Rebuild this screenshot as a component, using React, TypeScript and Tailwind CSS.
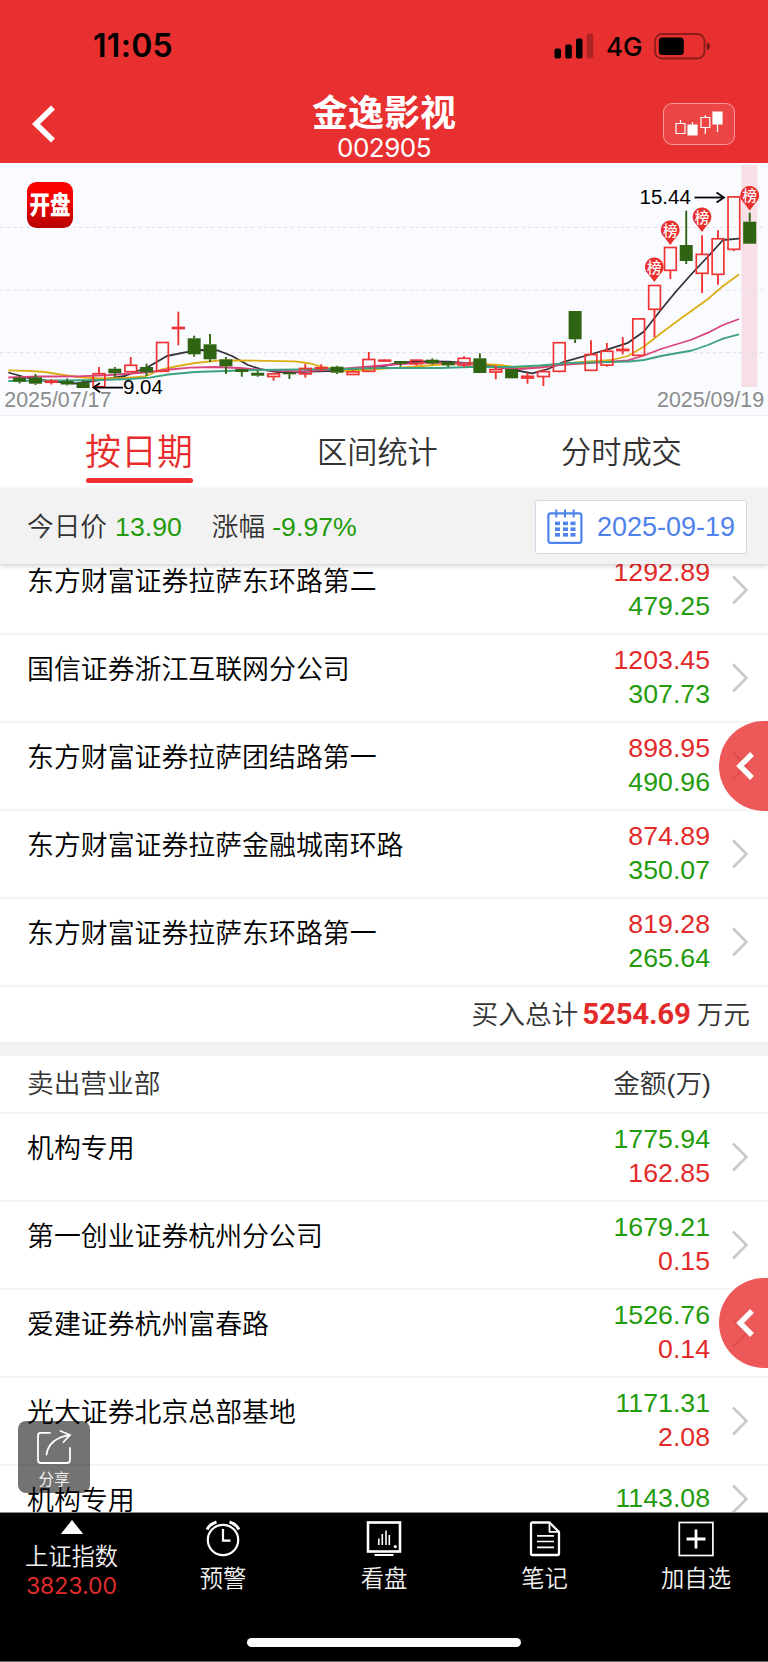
import React from "react";

type Candle = [kind: "r" | "g", high: number, top: number, bottom: number, low: number];

const CANDLES: Candle[] = [
  ["g", 376.5, 377.7, 381.7, 383.5],
  ["g", 374, 377.3, 383.7, 385],
  ["r", 379, 381.2, 382.2, 384.5],
  ["g", 378.5, 381, 384.5, 385.5],
  ["g", 380, 382.7, 388, 388],
  ["r", 367, 373.7, 386.7, 386.7],
  ["g", 367, 368.7, 373.3, 377],
  ["r", 357, 365.3, 371.7, 371.7],
  ["g", 363.7, 367, 372.3, 376],
  ["r", 342.5, 342.5, 371.3, 371.3],
  ["r", 311.7, 327.5, 328.5, 345.3],
  ["g", 335.7, 338.3, 354.3, 356.7],
  ["g", 334, 344.3, 359.3, 362],
  ["g", 357, 359.3, 366.3, 374],
  ["g", 369, 369, 372, 376.7],
  ["g", 370.7, 372.7, 375.7, 376.7],
  ["r", 372.7, 373.9, 376.5, 380.7],
  ["g", 372, 372.7, 374.3, 379],
  ["r", 364, 368.5, 373.9, 377.7],
  ["r", 364.3, 367.7, 368.5, 371.3],
  ["g", 365.7, 366.7, 372.7, 374],
  ["r", 370.3, 371.9, 374.5, 374.5],
  ["r", 352, 359.5, 371.3, 371.3],
  ["r", 359.5, 360.2, 361, 361.5],
  ["g", 361, 361, 363.7, 366.5],
  ["r", 359.7, 360.2, 363.7, 365.7],
  ["g", 358.3, 359.7, 363.3, 364.7],
  ["g", 362, 362, 365.3, 367],
  ["r", 356.3, 358.3, 365, 367],
  ["g", 353.3, 358.3, 373, 373],
  ["r", 365.3, 369.6, 372, 379.3],
  ["g", 369, 369, 378.3, 378.3],
  ["r", 372.7, 376.3, 378, 383.7],
  ["r", 369.3, 371.6, 376.5, 386],
  ["r", 342.7, 342.7, 371.3, 372.3],
  ["g", 311, 311, 339.3, 343],
  ["r", 340.3, 354.6, 370.3, 370.3],
  ["r", 343, 351.2, 365.1, 366.7],
  ["r", 337, 349.4, 350.5, 354.3],
  ["r", 318.7, 318.9, 355.3, 355.3],
  ["r", 285.3, 285.5, 309.3, 337.3],
  ["r", 247.3, 247.5, 270.3, 279],
  ["g", 210.7, 245, 261, 264],
  ["r", 235.3, 254.4, 273.3, 293],
  ["r", 230.3, 238.8, 274.3, 284.7],
  ["r", 196.7, 196.9, 249.3, 251],
  ["g", 212.7, 221.7, 243.7, 243.7],
];

const MOVING_AVERAGES = [
  {
    color: "#333338",
    points:
      "8.3,372.5 28,378 48,381 76,383.5 100,380 125,376 148,367 167,356 185,352.3 200,350 218,350.5 232,356 248,365 262,369.5 278,372 295,372.3 310,371.5 345,370.5 367,367.5 384,366 401,362.5 425,361.5 448,361.7 465,363 480,363 495,366.5 512,369.5 532,373.3 548,369 564,361.8 590,354.5 608,349.3 628,342.8 644,331.5 660,311 676,291.5 692,273.5 708,256.5 723,240 739,238.7",
  },
  {
    color: "#dcae14",
    points:
      "8.3,370.3 30,371 45,372 60,374.5 78,377 100,378.5 125,378 145,376.5 160,370 178,366 195,363 218,360.7 235,360.3 265,360.8 295,361.3 310,363.5 325,367.5 345,371 365,370 384,368.7 410,367 440,364.5 470,363.5 500,365 520,368 545,367 564,363.3 590,361.5 612,360 628,356 644,346.5 660,334 676,322 692,310.5 708,299 723,286 739,274.6",
  },
  {
    color: "#d9437f",
    points:
      "8.3,377.5 40,376.5 78,376.3 110,375 145,372.5 165,370 190,367.7 215,367 240,368 265,370 300,371.5 340,369 370,366.5 400,364 430,362.7 465,363.5 490,367 520,369 540,367.5 560,365 600,362.3 628,360.3 644,355.5 661,349 692,339.5 708,332.7 723,325 739,319",
  },
  {
    color: "#3da182",
    points:
      "8.3,381 60,380.5 100,380 130,379 150,377.7 168,374.5 195,372 225,371 255,370 300,369.5 340,369 384,368 440,368 470,367 510,367 540,365.5 570,363 610,362 629,361.5 644,360 661,356 692,350.5 708,345 723,338.7 739,334.3",
  },
];

const PINS = [
  [654.3, 267.5],
  [670.2, 230.5],
  [702, 217.5],
  [749.7, 196],
];

function Chart() {
  return (
    <svg width="768" height="252" viewBox="0 163 768 252" className="block">
      <defs>
        <linearGradient id="logo" x1="0" y1="0" x2="0" y2="1">
          <stop offset="0" stopColor="#fe0000" />
          <stop offset="0.35" stopColor="#f40303" />
          <stop offset="1" stopColor="#b80202" />
        </linearGradient>
      </defs>
      <rect x="741.5" y="165" width="16" height="222" fill="#f6dfe5" />
      {[227.4, 290, 352.6].map((y) => (
        <line key={y} x1="0" x2="764" y1={y} y2={y} stroke="#e2e3e7" strokeWidth="1.2" strokeDasharray="3.6 3" />
      ))}
      {MOVING_AVERAGES.map((m) => (
        <polyline key={m.color} points={m.points} fill="none" stroke={m.color} strokeWidth="1.8" strokeLinejoin="round" />
      ))}
      {CANDLES.map(([kind, high, top, bottom, low], i) => {
        const x = 19.6 + i * 15.872;
        const color = kind === "r" ? "#f03434" : "#2f6412";
        return (
          <g key={i} stroke={color}>
            <line x1={x} x2={x} y1={high} y2={top} strokeWidth="1.9" />
            <line x1={x} x2={x} y1={bottom} y2={low} strokeWidth="1.9" />
            {kind === "g" ? (
              <rect x={x - 6.5} y={top} width="13" height={bottom - top} fill={color} stroke="none" />
            ) : (
              <rect x={x - 5.8} y={top} width="11.7" height={bottom - top} fill="none" strokeWidth="1.7" />
            )}
          </g>
        );
      })}
      {PINS.map(([x, y]) => (
        <g key={x}>
          <path
            d={`M${x - 8.2} ${y + 4}A9.4 9.4 0 1 1 ${x + 8.2} ${y + 4}Q${x + 4} ${y + 9} ${x} ${y + 14.5}Q${x - 4} ${y + 9} ${x - 8.2} ${y + 4}Z`}
            fill="#ea2f2f"
          />
          <text x={x} y={y + 5.2} textAnchor="middle" fontSize="14.5" fontWeight="500" fill="#fff">
            榜
          </text>
        </g>
      ))}
      <g fontSize="20.5" fill="#000">
        <text x="639.5" y="204">15.44</text>
        <text x="123" y="394.4">9.04</text>
      </g>
      <g stroke="#000" strokeWidth="1.8" fill="none">
        <path d="M694.5 197.5H723" />
        <path d="M716.5 192.5L724 197.5L716.5 202.5" />
        <path d="M123 387.6H94" />
        <path d="M100 383L93.5 387.6L100 392.2" />
      </g>
      <g fontSize="21.4" fill="#8c8c8c">
        <text x="4.3" y="407.3">2025/07/17</text>
        <text x="657" y="407.3">2025/09/19</text>
      </g>
      <rect x="27" y="182" width="46" height="46" rx="9.5" fill="url(#logo)" />
      <text
        transform="translate(50 213.8) scale(1 1.24)"
        textAnchor="middle"
        fontSize="20.5"
        fontWeight="900"
        fill="#fff"
      >
        开盘
      </text>
    </svg>
  );
}

function RowChevron() {
  return (
    <svg width="18" height="30" viewBox="0 0 18 30" fill="none" stroke="#c8c8c8" strokeWidth="2.5">
      <path d="M2 1.5L15.5 15L2 28.5" />
    </svg>
  );
}

interface RowProps {
  name: string;
  first: string;
  second?: string;
  side: "buy" | "sell";
}

function Row({ name, first, second, side }: RowProps) {
  const red = "text-[#e32a2a]";
  const green = "text-[#229b0c]";
  return (
    <div
      className={
        "flex border-b-2 border-[#f4f4f4] pl-[27px] pr-[19px] text-[26.7px] leading-[34px] " +
        (second ? "h-[88px]" : "h-[68px]")
      }
    >
      <div className="mt-[18px] flex-1 text-[26.9px] font-[350] text-black">{name}</div>
      <div className="flex flex-col justify-center pb-[2px] text-right">
        <div className={side === "buy" ? red : green}>{first}</div>
        {second && <div className={side === "buy" ? green : red}>{second}</div>}
      </div>
      <div className="ml-[21px] flex items-center">
        <RowChevron />
      </div>
    </div>
  );
}

const BUYS: [string, string, string][] = [
  ["东方财富证券拉萨东环路第二", "1292.89", "479.25"],
  ["国信证券浙江互联网分公司", "1203.45", "307.73"],
  ["东方财富证券拉萨团结路第一", "898.95", "490.96"],
  ["东方财富证券拉萨金融城南环路", "874.89", "350.07"],
  ["东方财富证券拉萨东环路第一", "819.28", "265.64"],
];

const SELLS: [string, string, string?][] = [
  ["机构专用", "1775.94", "162.85"],
  ["第一创业证券杭州分公司", "1679.21", "0.15"],
  ["爱建证券杭州富春路", "1526.76", "0.14"],
  ["光大证券北京总部基地", "1171.31", "2.08"],
  ["机构专用", "1143.08"],
];

function StatusBar() {
  return (
    <div className="flex h-[94px] items-center justify-between pl-[93px] pr-[57px] font-['Inter',sans-serif] text-black">
      <div className="mb-[2px] text-[32px] font-semibold leading-none tracking-[0.3px]">11:05</div>
      <div className="mb-[2px] flex items-center">
        <svg width="40" height="26" viewBox="0 0 40 26">
          <rect x="0.5" y="15.5" width="6.5" height="10" rx="1.8" />
          <rect x="11.3" y="11.5" width="6.5" height="14" rx="1.8" />
          <rect x="22" y="5.5" width="6.5" height="20" rx="1.8" />
          <rect x="32.7" y="0.5" width="6.5" height="25" rx="1.8" opacity="0.25" />
        </svg>
        <span className="ml-[12px] mt-[2px] w-[37px] text-[26px] font-[450] leading-none">4G</span>
        <svg className="ml-[11px]" width="57" height="27" viewBox="0 0 57 27">
          <rect x="1" y="1" width="49.5" height="24.5" rx="7" fill="none" stroke="#000" strokeOpacity="0.4" strokeWidth="1.8" />
          <rect x="4.8" y="4.5" width="25" height="17.5" rx="3.5" />
          <path d="M52.8 9.3Q56 10.3 56 13.3Q56 16.3 52.8 17.3Z" opacity="0.5" />
        </svg>
      </div>
    </div>
  );
}

function Header() {
  return (
    <header className="h-[163px] bg-[#e93030]">
      <StatusBar />
      <div className="grid h-[69px] grid-cols-[312px_144px_312px] text-white">
        <svg className="ml-[30px] mt-[10px]" width="28" height="40" viewBox="0 0 28 40" fill="none" stroke="#fff" strokeWidth="5.6">
          <path d="M23 3.5L6 20L23 36.5" />
        </svg>
        <div className="pt-px text-center">
          <div className="whitespace-nowrap text-[36px] font-bold leading-[38px]">金逸影视</div>
          <div className="font-['Inter',sans-serif] text-[26px] leading-[29px] tracking-[-0.5px]">002905</div>
        </div>
        <div className="flex justify-end pr-[33px] pt-[9px]">
          <div className="h-[42px] w-[72px] rounded-[9px] border border-white/45 bg-white/10">
            <svg width="70" height="40" viewBox="664 104 70 40" fill="none" stroke="#fff" strokeWidth="1.2">
              <path d="M676 123.5h9v10h-9zM680.5 120v3.5" />
              <path d="M688 125h9v10h-9zM692.5 122v3" fill="#fff" />
              <path d="M701 117.5h8.8v10h-8.8zM705.3 115v2.5M705.3 127.5v6.5" />
              <path d="M713 112h9v12h-9zM717.5 124v8" fill="#fff" />
            </svg>
          </div>
        </div>
      </div>
    </header>
  );
}

function CalendarIcon() {
  const cols = [8, 16, 23.5];
  const rows = [12.6, 18.4, 24];
  return (
    <svg width="36" height="36" viewBox="0 0 36 36" fill="none" stroke="#4f82ec">
      <rect x="1.4" y="4.4" width="33" height="29.4" rx="2" strokeWidth="2.2" />
      <path d="M9.3 0.5v8M18 0.5v8M26.7 0.5v8" strokeWidth="2" />
      {rows.map((y) => cols.map((x) => <rect key={`${x}-${y}`} x={x} y={y} width="5" height="3.6" fill="#4f82ec" stroke="none" />))}
    </svg>
  );
}

function AlarmIcon() {
  return (
    <svg width="36" height="37" viewBox="0 0 36 37" fill="none" stroke="#fff" strokeWidth="2.2">
      <circle cx="18" cy="20" r="15.2" />
      <path d="M18 9V20.7H25.5" />
      <path d="M2 9.5Q5 4 11.5 2M34 9.5Q31 4 24.5 2" strokeWidth="3" />
    </svg>
  );
}

function MonitorIcon() {
  return (
    <svg width="36" height="37" viewBox="0 0 36 37" fill="none" stroke="#fff" strokeWidth="2.6">
      <rect x="2" y="2.5" width="32" height="29" />
      <path d="M8.5 35H27.5" strokeWidth="2" />
      <path d="M12.8 18.5V25M16.3 14V25M20 10.5V25M23.3 15V25" strokeWidth="1.6" />
      <circle cx="29.3" cy="26.6" r="1.6" fill="#fff" stroke="none" />
    </svg>
  );
}

function NoteIcon() {
  return (
    <svg width="36" height="37" viewBox="0 0 36 37" fill="none" stroke="#fff" strokeWidth="2.3" strokeLinejoin="round">
      <path d="M5.5 2.5H22.5L32 12V33.5Q32 35 30.5 35H5.5Q4 35 4 33.5V4Q4 2.5 5.5 2.5Z" />
      <path d="M22.5 2.5V11.8H32" strokeWidth="1.8" />
      <path d="M10 15.8H27M10 21.5H27M10 27.3H27" strokeWidth="1.7" />
    </svg>
  );
}

function AddIcon() {
  return (
    <svg width="36" height="37" viewBox="0 0 36 37" fill="none" stroke="#fff">
      <rect x="1.3" y="2.5" width="33.6" height="33" strokeWidth="1.7" />
      <path d="M18 9.5V28.5M8.5 19H27.5" strokeWidth="2.8" />
    </svg>
  );
}

const ACTIONS = [
  { label: "预警", Icon: AlarmIcon },
  { label: "看盘", Icon: MonitorIcon },
  { label: "笔记", Icon: NoteIcon },
  { label: "加自选", Icon: AddIcon },
];

function BottomBar() {
  return (
    <footer className="flex h-[150px] flex-col justify-between border-y border-t-[#8b8b8b] border-b-[#666] bg-black">
      <div className="grid grid-cols-[143px_160px_162px_159px_144px] text-center text-[23.3px] font-[350] text-[#f2f2f2]">
        <div className="flex flex-col items-center">
          <svg className="mt-[7px]" width="24" height="14" viewBox="0 0 24 14" fill="#fff">
            <path d="M12 0L23.2 14H0.8Z" />
          </svg>
          <div className="mt-[7px] leading-[32px]">上证指数</div>
          <div className="font-['Inter',sans-serif] text-[23px] font-normal leading-[26px] text-[#e02c2c]">3823.00</div>
        </div>
        {ACTIONS.map(({ label, Icon }) => (
          <div key={label} className="flex flex-col items-center pt-[7px]">
            <Icon />
            <div className="mt-[6px] leading-[32px]">{label}</div>
          </div>
        ))}
      </div>
      <div className="mb-[14px] h-[9px] w-[274px] self-center rounded-full bg-white" />
    </footer>
  );
}

function SideHandle({ className }: { className: string }) {
  return (
    <div className={"absolute right-0 flex h-[90px] w-[49px] items-center rounded-l-[45px] bg-[#e93030]/80 pl-[16px] " + className}>
      <svg width="20" height="32" viewBox="0 0 20 32" fill="none" stroke="#fff" strokeWidth="5.4">
        <path d="M17 4L5 16L17 28" />
      </svg>
    </div>
  );
}

export default function App() {
  return (
    <div className="relative flex h-[1662px] w-[768px] flex-col overflow-hidden bg-white font-['Liberation_Sans','Noto_Sans_CJK_SC',sans-serif] text-[#333]">
      <Header />
      <div className="h-[253px] border-b border-[#eef0f4] bg-[#fafbff]">
        <Chart />
      </div>

      <nav className="flex h-[72px] font-[350]">
        <div className="ml-[85px] flex w-[108px] flex-col items-center">
          <div className="mt-[15px] whitespace-nowrap text-[36px] leading-[44px] text-[#e82c2c]">按日期</div>
          <div className="mt-[3px] h-[5px] w-[107px] rounded-full bg-[#ee3030]" />
        </div>
        <div className="ml-[124px] w-[120px] whitespace-nowrap text-[30.2px] leading-[74px]">区间统计</div>
        <div className="ml-[124px] w-[120px] whitespace-nowrap text-[30.2px] leading-[74px]">分时成交</div>
      </nav>

      <div className="relative z-10 flex h-[76px] items-center bg-[#f2f2f2] pl-[27px] pr-[21px] pt-[2px] text-[26.7px] shadow-[0_2px_5px_rgba(0,0,0,0.18)]">
        <span className="font-[350]">今日价</span>
        <span className="ml-[8px] text-[#229b0c]">13.90</span>
        <span className="ml-[30px] font-[350]">涨幅</span>
        <span className="ml-[7px] text-[#229b0c]">-9.97%</span>
        <div className="ml-auto flex h-[54px] w-[212px] items-center rounded-[3px] border-[1.5px] border-[#d3d9e6] bg-white pl-[11px] text-[27px] text-[#4f82ec]">
          <CalendarIcon />
          <span className="ml-[14px]">2025-09-19</span>
        </div>
      </div>

      <main className="h-[948px] overflow-hidden">
        <div className="-mt-[17px]">
          {BUYS.map(([name, first, second]) => (
            <Row key={name} name={name} first={first} second={second} side="buy" />
          ))}
          <div className="flex h-[55px] items-center justify-end pr-[18px] pt-px text-[26.7px] font-[350]">
            <span>买入总计</span>
            <span className="mb-[2px] ml-[4px] mr-[6px] font-['Roboto',sans-serif] text-[29.4px] font-bold tracking-[-0.2px] text-[#e32a2a]">5254.69</span>
            <span>万元</span>
          </div>
          <div className="h-[14px] bg-[#f2f2f2]" />
          <div className="flex h-[58px] items-center justify-between border-b-2 border-[#f4f4f4] pl-[27px] pr-[57px] text-[26.7px] font-[350]">
            <span>卖出营业部</span>
            <span>金额(万)</span>
          </div>
          {SELLS.map(([name, first, second]) => (
            <Row key={first} name={name} first={first} second={second} side="sell" />
          ))}
        </div>
      </main>

      <BottomBar />

      <SideHandle className="top-[721px]" />
      <SideHandle className="top-[1278px]" />

      <div className="absolute left-[18px] top-[1421px] flex h-[72px] w-[72px] flex-col items-center rounded-[8px] bg-black/55 text-[#eee]">
        <svg className="mt-[9px]" width="36" height="36" viewBox="0 0 36 36" fill="none" stroke="#fff" strokeWidth="1.8" strokeLinecap="round">
          <path d="M14 2.8H4.5Q2 2.8 2 5.5V30Q2 33 5 33H31Q34 33 34 30V18" />
          <path d="M10.5 24.5Q13 8.5 33.5 5.2M24.5 1L34 5L27.5 12" />
        </svg>
        <div className="mt-[2px] text-[15.5px] leading-[24px]">分享</div>
      </div>
    </div>
  );
}
